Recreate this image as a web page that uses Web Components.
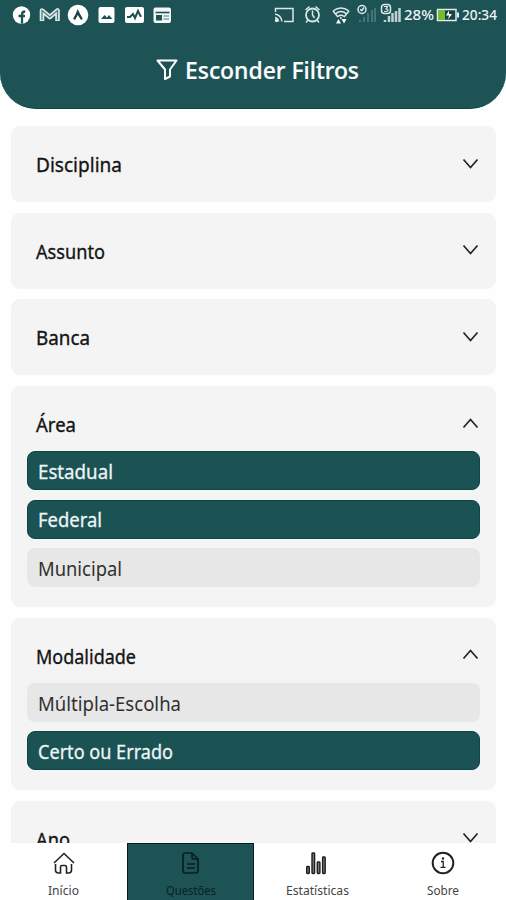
<!DOCTYPE html>
<html lang="pt">
<head>
<meta charset="utf-8">
<title>Filtros</title>
<style>
html,body{margin:0;height:100%;background:#fefefe;overflow:hidden}
body{font-family:"Noto Sans","Open Sans",sans-serif;color:#141414}
</style>
</head>
<body>
<filter-app></filter-app>
<script>
const define = (name, html, setup) => customElements.define(name, class extends HTMLElement {
  connectedCallback() {
    if (this.shadowRoot) return;
    const root = this.attachShadow({ mode: 'open' });
    root.innerHTML = html;
    if (setup) setup(this, root);
  }
});

/* Text condensed horizontally to the width given in its "w" attribute. */
define('fit-text', `
<style>:host{display:block;white-space:nowrap}span{display:inline-block;transform-origin:0 50%}</style>
<span><slot></slot></span>`, (el, root) => {
  const span = root.querySelector('span'), w = +el.getAttribute('w');
  el.style.width = w + 'px';
  span.style.transform = `scaleX(${w / span.getBoundingClientRect().width})`;
});

define('status-bar', `
<style>
:host{display:flex;justify-content:space-between;height:30px;padding:0 9px 0 12px;box-sizing:border-box;color:#eef4f4;font-size:15px;font-weight:500}
.g{display:flex;align-items:center;height:30px}
svg{display:block}
fit-text{line-height:28px;height:30px}
</style>
<div class="g">
<svg width="162" height="30" viewBox="12 0 162 30">
  <circle cx="21.500" cy="15" r="8.700" fill="#fff"/>
  <path d="M22 23.500v-9q0-3 3.200-3M18.500 16h6.500" fill="none" stroke="#1b5254" stroke-width="2.300"/>
  <path d="M42 21V10.500l7.800 6.500L57.500 10.500V21" fill="none" stroke="#dfe9e9" stroke-width="4.600" stroke-linejoin="round"/>
  <path d="M42 20V10.500l7.800 6.500 7.700-6.500V20" fill="none" stroke="#4f7b7c" stroke-width="1.200"/>
  <circle cx="78" cy="15" r="10.300" fill="#fff"/>
  <path d="M74.500 18.500q2-3 3.300-6.500q1.500 3.500 3.600 6.500" fill="none" stroke="#1b4547" stroke-width="2.300" stroke-linecap="round"/>
  <rect x="98.500" y="7" width="16" height="16" rx="2" fill="#fff"/>
  <path d="M101 19l3.500-4 2.500 2.500 2-2.500 3.500 4z" fill="#1b5254"/>
  <rect x="125" y="7" width="19" height="16" rx="2" fill="#fff"/>
  <path d="M127 17h3l3-3 2 4 3-7 2.500 5h1" fill="none" stroke="#1b5254" stroke-width="2"/>
  <rect x="153.500" y="7.500" width="17.500" height="15.500" rx="2" fill="#f4f8f8"/>
  <path d="M155.500 12.500h14" stroke="#1b5254" stroke-width="1.600"/>
  <path d="M156 15h6v5.500h-6z" fill="#1b5254"/><path d="M163.500 16h5.500M163.500 19h5.500" stroke="#82a3a4" stroke-width="1.300"/>
</svg>
</div>
<div class="g">
<svg width="130" height="30" viewBox="274 0 130 30" fill="none" stroke="#dce8e8" stroke-width="1.500">
  <path d="M275.500 12V8.500h17.500v13h-9M275 14q6 1 7 7.500M275 17.500q3 .5 3.500 4"/><circle cx="276.500" cy="20.500" r="1" fill="#dce8e8"/>
  <circle cx="312.500" cy="15" r="6.500" stroke-width="1.800"/><path d="M312.500 10.500V15l2 3M305.500 10l4-3.500M319.500 10l-4-3.500M308 20l-2 2.500M317 20l2 2.500"/>
  <path d="M333 11q8-6 16 0M335.500 13.800q5.500-4.500 11 0M338 16.500q3-2.500 6 0"/>
  <path d="M333 11l5 6M349 11l-5 6M340.800 17v2"/><path d="M336 23.500l2.500-4.500 2.500 4.500zM341.500 19h5l-2.500 4.500z" fill="#fff" stroke="none"/>
  <g stroke="#477476" stroke-width="2"><path d="M360 22v-2M364 22v-5M368 22V13M372 22V10M375 22V8"/></g>
  <circle cx="362" cy="9.500" r="4"/><path d="M360 9.500l2 1 2-3"/>
  <g stroke="#c2d2d3" stroke-width="2.500"><path d="M385 22v-2M389 22v-6M392.500 22v-9M396 22V11M399.500 22V8"/></g>
  <rect x="381.500" y="4.500" width="9" height="9" rx="3"/><path d="M384 6.500h3.500L386 8.800q2 0 2 1.400T384 11.500" stroke-width="1.200"/>
</svg>
<fit-text w="30">28%</fit-text>
<svg width="28" height="30" viewBox="434 0 28 30">
  <rect x="437.500" y="9.500" width="18.500" height="11" fill="#174345" stroke="#e3ecec" stroke-width="1.500"/>
  <path d="M438 10h7v10h-7z" fill="#72bd31"/><path d="M457 12.500h2v5h-2z" fill="#e3ecec"/>
  <path d="M449 10.500l-3 5h3l-1 4 4-5.500h-3z" fill="#fff"/>
</svg>
<fit-text w="35">20:34</fit-text>
</div>`);

define('filter-header', `
<style>
:host{display:block;height:109px;box-sizing:border-box;background:#1d5355;border-bottom:1px solid #0b4544;border-radius:0 0 36px 36px;color:#fff}
.title{display:flex;align-items:center;gap:7px;height:30px;margin:25px 0 0 156px;font-size:23.500px;font-weight:500;-webkit-text-stroke:.2px #fff}
</style>
<status-bar></status-bar>
<div class="title">
<svg width="22" height="24" viewBox="0 0 22 24" fill="none" stroke="#fff" stroke-width="2" stroke-linejoin="round"><path d="M1.500 2.500h19l-6.500 9v7L9 21v-9.500z"/></svg>
<fit-text w="174">Esconder Filtros</fit-text>
</div>`);

define('filter-card', `
<style>
:host{display:block;box-sizing:border-box;min-height:76px;padding:0 16px;background:#f4f4f4;border-radius:9px}
.head{display:flex;align-items:center;justify-content:space-between;box-sizing:border-box;height:76px;padding:0 1px 0 9px;font-size:20.500px;-webkit-text-stroke:.35px #141414}
:host([open]) .head{height:65px;padding-top:11px}
:host([open]){padding-bottom:20px}
.list{display:flex;flex-direction:column;gap:9.500px}
svg{margin-bottom:1px}
:host([open]) svg{transform:rotate(180deg);margin-bottom:3px}
</style>
<div class="head"><slot name="title"></slot>
<svg width="17" height="12" viewBox="0 0 17 12" fill="none" stroke="#222" stroke-width="1.700"><path d="M1.500 1.500l7 8 7-8"/></svg></div>
<div class="list"><slot></slot></div>`);

define('filter-option', `
<style>
:host{display:flex;align-items:center;box-sizing:border-box;height:39px;padding:2px 11px 0 11px;border-radius:8px;background:#e7e7e7;color:#303030;font-size:20px}
:host([selected]){background:#1b5254;border:1px solid #0c4645;padding:1px 10px 0 10px;color:#eef5f5;-webkit-text-stroke:.3px #eef5f5}
</style><slot></slot>`);

define('nav-tab', `
<style>
:host{display:flex;flex-direction:column;align-items:center;box-sizing:border-box;padding-top:7px;color:#444;font-size:12px;line-height:16px}
:host([active]){background:#1d5355;border:solid #061d1d;border-width:1px 1.500px 0;padding-top:6px;color:#0a2223}
.i{height:26px;margin-bottom:7px}
</style>
<div class="i"><slot name="icon"></slot></div><slot></slot>`);

define('nav-bar', `
<style>
:host{display:grid;grid-template-columns:127px 127px 126px 126px;background:#fff;height:57px}
svg{display:block}
</style>
<nav-tab><svg slot="icon" width="26" height="26" fill="none" stroke="#222" stroke-width="1.600"><path d="M3 13l10-9.500L23 13"/><path d="M4.500 14v6q0 3 3 3h2v-6q0-1.500 1.500-1.500h3q1.500 0 1.500 1.500v6h2q3 0 3-3v-6"/></svg><fit-text w="31">Início</fit-text></nav-tab>
<nav-tab active><svg slot="icon" width="26" height="26" fill="none" stroke="#091f20" stroke-width="1.700" stroke-linejoin="round"><path d="M14 3H7.500q-2.500 0-2.500 2.500v15Q5 23 7.500 23h10q2.500 0 2.500-2.500V9zM14 3v4q0 2 2 2h4M9 14h8M9 18h8"/></svg><fit-text w="50">Questões</fit-text></nav-tab>
<nav-tab><svg slot="icon" width="26" height="26" stroke-width="1.400"><g fill="#777" stroke="#202020"><rect x="2.700" y="16.500" width="2.600" height="7" rx=".7"/><rect x="8" y="3" width="2.600" height="20.500" rx=".7"/><rect x="13.300" y="12" width="2.600" height="11.500" rx=".7"/><rect x="18.600" y="7" width="2.600" height="16.500" rx=".7"/></g></svg><fit-text w="63">Estatísticas</fit-text></nav-tab>
<nav-tab><svg slot="icon" width="26" height="26" fill="none" stroke="#222"><circle cx="13" cy="13" r="10.300" stroke-width="2"/><path d="M11 11.500h2.200V17M10.500 17.300h5" stroke-width="1.300"/><circle cx="13" cy="8.500" r="1.200" fill="#222" stroke="none"/></svg><fit-text w="32">Sobre</fit-text></nav-tab>`);

define('filter-app', `
<style>
:host{display:flex;flex-direction:column;width:506px;height:900px;overflow:hidden}
filter-header,nav-bar{flex:none}
main{flex:1;min-height:0;overflow:hidden;display:flex;flex-direction:column;gap:10.700px;padding:17px 10px 0 11px}
filter-card{flex:none}
</style>
<filter-header></filter-header>
<main>
<filter-card><fit-text slot="title" w="86">Disciplina</fit-text></filter-card>
<filter-card><fit-text slot="title" w="69">Assunto</fit-text></filter-card>
<filter-card><fit-text slot="title" w="54">Banca</fit-text></filter-card>
<filter-card open><fit-text slot="title" w="40">Área</fit-text>
<filter-option selected><fit-text w="75">Estadual</fit-text></filter-option>
<filter-option selected><fit-text w="64">Federal</fit-text></filter-option>
<filter-option><fit-text w="84">Municipal</fit-text></filter-option></filter-card>
<filter-card open><fit-text slot="title" w="100">Modalidade</fit-text>
<filter-option><fit-text w="143">Múltipla-Escolha</fit-text></filter-option>
<filter-option selected><fit-text w="135">Certo ou Errado</fit-text></filter-option></filter-card>
<filter-card><fit-text slot="title" w="34">Ano</fit-text></filter-card>
</main>
<nav-bar></nav-bar>`);
</script>
</body>
</html>
